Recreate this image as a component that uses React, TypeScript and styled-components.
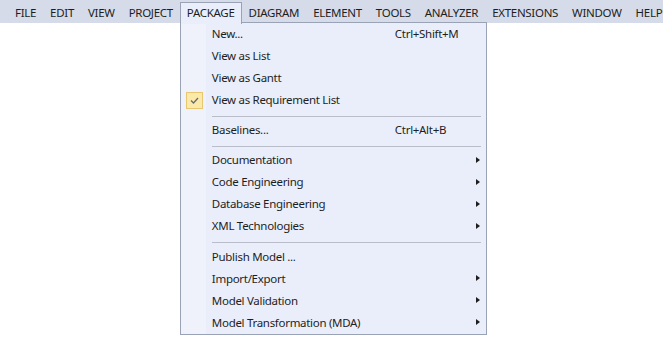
import React from 'react';
import styled, { createGlobalStyle } from 'styled-components';

const Global = createGlobalStyle`
    html, body, #root {
        margin: 0;
        padding: 0;
        height: 100%;
        background: #ffffff;
    }
    body {
        font-family: "Noto Sans", "Open Sans", sans-serif;
        font-size: 11.5px;
        letter-spacing: -0.3px;
        color: #1e1e1e;
    }
`

type Entry =
    | { kind: 'item'; label: string; shortcut?: string; sub?: boolean; checked?: boolean }
    | { kind: 'sep' };

const topMenus = ['FILE', 'EDIT', 'VIEW', 'PROJECT', 'PACKAGE', 'DIAGRAM', 'ELEMENT', 'TOOLS', 'ANALYZER', 'EXTENSIONS', 'WINDOW', 'HELP'];

const entries: Entry[] = [
    { kind: 'item', label: 'New...', shortcut: 'Ctrl+Shift+M' },
    { kind: 'item', label: 'View as List' },
    { kind: 'item', label: 'View as Gantt' },
    { kind: 'item', label: 'View as Requirement List', checked: true },
    { kind: 'sep' },
    { kind: 'item', label: 'Baselines...', shortcut: 'Ctrl+Alt+B' },
    { kind: 'sep' },
    { kind: 'item', label: 'Documentation', sub: true },
    { kind: 'item', label: 'Code Engineering', sub: true },
    { kind: 'item', label: 'Database Engineering', sub: true },
    { kind: 'item', label: 'XML Technologies', sub: true },
    { kind: 'sep' },
    { kind: 'item', label: 'Publish Model ...' },
    { kind: 'item', label: 'Import/Export', sub: true },
    { kind: 'item', label: 'Model Validation', sub: true },
    { kind: 'item', label: 'Model Transformation (MDA)', sub: true },
];

function PackageMenu() {
    return (
        <Dropdown>
            {entries.map((e, i) =>
                e.kind === 'sep' ? (
                    <Separator key={i}>
                        <Gutter />
                        <Line />
                    </Separator>
                ) : (
                    <Row key={i}>
                        <Gutter>
                            {e.checked && (
                                <Check>
                                    <svg width="9" height="7" viewBox="0 0 9 7">
                                        <path d="M1 3.5 L3.5 6 L8 1" fill="none" stroke="#6a6a6a" strokeWidth="1.3" />
                                    </svg>
                                </Check>
                            )}
                        </Gutter>
                        <Label>{e.label}</Label>
                        <Shortcut>{e.shortcut}</Shortcut>
                        <Arrow>{e.sub && <ArrowShape />}</Arrow>
                    </Row>
                )
            )}
        </Dropdown>
    )
}

export default function App() {
    return (
        <>
            <Global />
            <Page>
                <MenuBar>
                    <Grip />
                    {topMenus.map((m) =>
                        m === 'PACKAGE' ? (
                            <MenuWrap key={m}>
                                <TopItem $open>{m}</TopItem>
                                <PackageMenu />
                            </MenuWrap>
                        ) : (
                            <TopItem key={m} $open={false}>{m}</TopItem>
                        )
                    )}
                </MenuBar>
            </Page>
        </>
    )
}

const Page = styled.div`
    height: 100%;
    min-height: 337px;
    background: #ffffff;
`

const MenuBar = styled.div`
    height: 23px;
    display: flex;
    align-items: stretch;
    background: #d6dbe9;
    white-space: nowrap;
`

const Grip = styled.div`
    width: 4px;
    margin: 3px 6px 3px 2px;
    background-image: radial-gradient(circle, #8a8f9c 0.7px, transparent 0.8px);
    background-size: 2px 2px;
`

const MenuWrap = styled.div`
    position: relative;
    display: flex;
`

const TopItem = styled.div<{ $open: boolean }>`
    position: relative;
    display: flex;
    align-items: center;
    padding: 0 6px ${(p) => (p.$open ? '2px' : '1px')};
    margin-top: 2px;
    margin-bottom: ${(p) => (p.$open ? '-1px' : '0')};
    border: 1px solid ${(p) => (p.$open ? '#9aa3b6' : 'transparent')};
    border-bottom: none;
    background: ${(p) => (p.$open ? '#e9eefa' : 'transparent')};
    color: #1e1e1e;
    z-index: ${(p) => (p.$open ? 3 : 0)};
`

const Dropdown = styled.div`
    position: absolute;
    top: 22px;
    left: 0;
    width: 305px;
    background: #e9eefa;
    border: 1px solid #9aa3b6;
    display: flex;
    flex-direction: column;
    z-index: 2;
`

const Row = styled.div`
    box-sizing: border-box;
    height: 22px;
    padding-bottom: 2px;
    display: flex;
    align-items: center;
`

const Gutter = styled.div`
    width: 25px;
    align-self: stretch;
    margin-bottom: -2px;
    display: flex;
    align-items: center;
    justify-content: center;
    background: #eff2fa;
    margin-right: 6px;
    flex-shrink: 0;
`

const Check = styled.div`
    width: 15px;
    height: 15px;
    background: #fbe9a9;
    border: 1px solid #e9c770;
    display: flex;
    align-items: center;
    justify-content: center;
    margin-left: 2px;
`

const Label = styled.span`
    flex: 1;
`

const Shortcut = styled.span`
    width: 81px;
`

const Arrow = styled.div`
    width: 4px;
    display: flex;
    align-items: center;
    margin-right: 6px;
`

const ArrowShape = styled.div`
    width: 0;
    height: 0;
    border-top: 3.5px solid transparent;
    border-bottom: 3.5px solid transparent;
    border-left: 4px solid #1e1e1e;
`

const Separator = styled.div`
    height: 8.4px;
    display: flex;
`

const Line = styled.div`
    flex: 1;
    height: 1px;
    margin-top: 4.5px;
    margin-right: 5px;
    background: #b9bdc9;
`
